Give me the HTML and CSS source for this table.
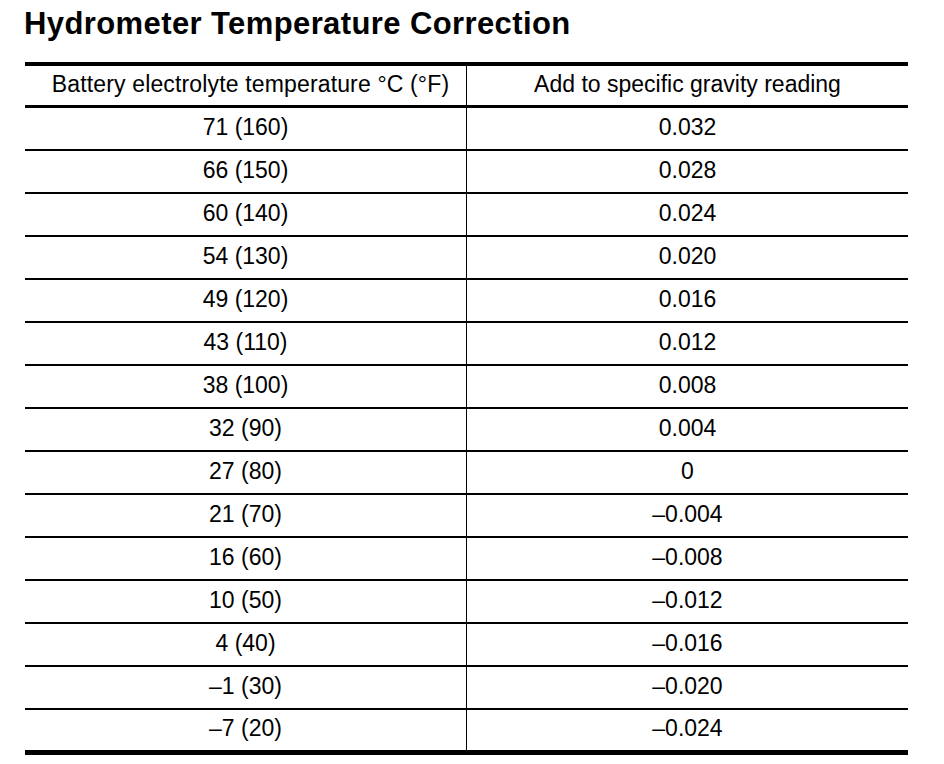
FILE: index.html
```html
<!DOCTYPE html>
<html lang="en">
<head>
<meta charset="utf-8">
<title>Hydrometer Temperature Correction</title>
<link rel="stylesheet" href="styles.css">
</head>
<body>
<div class="page">
  <h1 class="title">Hydrometer Temperature Correction</h1>
  <div class="table">
    <div class="row head">
      <div class="cell wide">Battery electrolyte temperature °C (°F)</div>
      <div class="cell">Add to specific gravity reading</div>
    </div>
    <div class="row"><div class="cell">71 (160)</div><div class="cell">0.032</div></div>
    <div class="row"><div class="cell">66 (150)</div><div class="cell">0.028</div></div>
    <div class="row"><div class="cell">60 (140)</div><div class="cell">0.024</div></div>
    <div class="row"><div class="cell">54 (130)</div><div class="cell">0.020</div></div>
    <div class="row"><div class="cell">49 (120)</div><div class="cell">0.016</div></div>
    <div class="row"><div class="cell">43 (110)</div><div class="cell">0.012</div></div>
    <div class="row"><div class="cell">38 (100)</div><div class="cell">0.008</div></div>
    <div class="row"><div class="cell">32 (90)</div><div class="cell">0.004</div></div>
    <div class="row"><div class="cell">27 (80)</div><div class="cell">0</div></div>
    <div class="row"><div class="cell">21 (70)</div><div class="cell">–0.004</div></div>
    <div class="row"><div class="cell">16 (60)</div><div class="cell">–0.008</div></div>
    <div class="row"><div class="cell">10 (50)</div><div class="cell">–0.012</div></div>
    <div class="row"><div class="cell">4 (40)</div><div class="cell">–0.016</div></div>
    <div class="row"><div class="cell">–1 (30)</div><div class="cell">–0.020</div></div>
    <div class="row"><div class="cell">–7 (20)</div><div class="cell">–0.024</div></div>
  </div>
</div>
</body>
</html>
```

FILE: styles.css
```css
html, body {
  margin: 0;
  padding: 0;
  background: #ffffff;
}

.page {
  padding: 6px 36px 0 25px;
  font-family: "Liberation Sans", Arial, sans-serif;
  color: #000000;
}

.title {
  margin: 0 0 20px -1px;
  font-size: 31px;
  font-weight: bold;
  line-height: 36px;
  letter-spacing: 0.4px;
  height: 36px;
}

.table {
  width: 883px;
  border-top: 4px solid #000;
  border-bottom: 5px solid #000;
}

.row {
  display: grid;
  grid-template-columns: 441px 1fr;
  height: 41px;
  border-bottom: 2px solid #000;
}

.row:last-child {
  height: 40px;
  border-bottom: none;
}

.row.head {
  height: 39px;
  border-bottom: 3px solid #000;
}

.cell {
  display: flex;
  align-items: center;
  justify-content: center;
  font-size: 23px;
  padding-bottom: 3px;
  box-sizing: border-box;
  white-space: nowrap;
}

.cell.wide {
  letter-spacing: 0.15px;
  padding-left: 10px;
}

.cell + .cell {
  border-left: 1px solid #000;
}
```
